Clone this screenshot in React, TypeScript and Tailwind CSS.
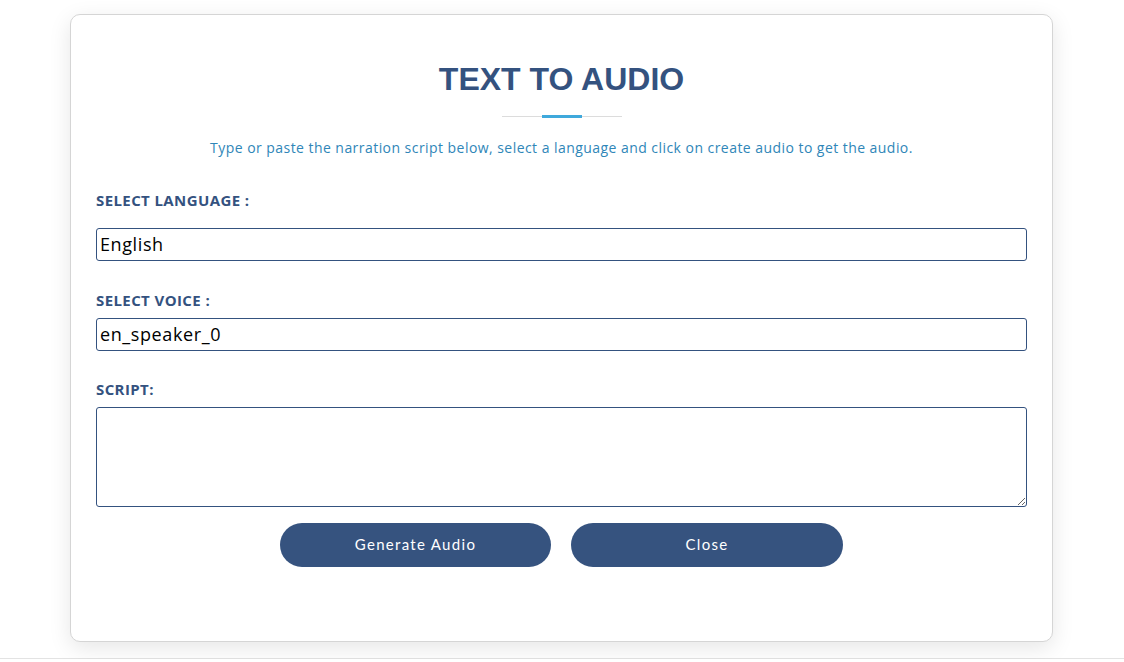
export default function App() {
  return (
    <div className="h-[659px] border-b border-[#e3e3e3] bg-white pt-[14px]">
      <div className="ml-[70px] w-[983px] h-[628px] rounded-[10px] border border-[#d5d5d5] bg-white shadow-[0_6px_22px_rgba(0,0,0,0.10)] px-[25px] pt-[46px] font-['Open_Sans',sans-serif]">
        {/* Header */}
        <h1 className="text-center text-[32px] leading-[36px] font-bold text-[#34527f] font-['Liberation_Sans',Arial,sans-serif]">
          TEXT TO AUDIO
        </h1>
        <div className="mt-[18px] flex justify-center">
          <div className="relative w-[120px] h-[3px] flex items-center">
            <div className="w-full h-px bg-[#dcdcdc]"></div>
            <div className="absolute left-[40px] top-0 w-[40px] h-[3px] bg-[#3fa9dc]"></div>
          </div>
        </div>
        <p className="mt-[20px] text-center text-[14px] leading-[20px] text-[#2f86b8] tracking-[0.45px]">
          Type or paste the narration script below, select a language and click on create audio to get the audio.
        </p>

        {/* Form */}
        <div className="mt-[32px]">
          <label className="block text-[15px] leading-[20px] font-bold text-[#34527f] tracking-[0.4px]">SELECT LANGUAGE :</label>
          <div className="mt-[18px] h-[33px] rounded-[3px] border border-[#34527f] flex items-center px-[3px] text-[18px] tracking-[0.6px] text-black">
            English
          </div>

          <label className="mt-[29px] block text-[15px] leading-[20px] font-bold text-[#34527f] tracking-[0.4px]">SELECT VOICE :</label>
          <div className="mt-[8px] h-[33px] rounded-[3px] border border-[#34527f] flex items-center px-[3px] text-[18px] tracking-[0.6px] text-black">
            en_speaker_0
          </div>

          <label className="mt-[28px] block text-[15px] leading-[20px] font-bold text-[#34527f] tracking-[0.4px]">SCRIPT:</label>
          <textarea className="mt-[8px] block w-full h-[100px] rounded-[3px] border border-[#34527f] outline-none"></textarea>
        </div>

        {/* Actions */}
        <div className="mt-[16px] flex justify-center gap-[20px] font-['Lato',sans-serif]">
          <button className="w-[271px] h-[44px] rounded-full bg-[#36537f] text-white text-[15px] leading-[20px] tracking-[1.3px] pb-[2px]">
            Generate Audio
          </button>
          <button className="w-[272px] h-[44px] rounded-full bg-[#36537f] text-white text-[15px] leading-[20px] tracking-[1.3px] pb-[2px]">
            Close
          </button>
        </div>
      </div>
    </div>
  );
}
